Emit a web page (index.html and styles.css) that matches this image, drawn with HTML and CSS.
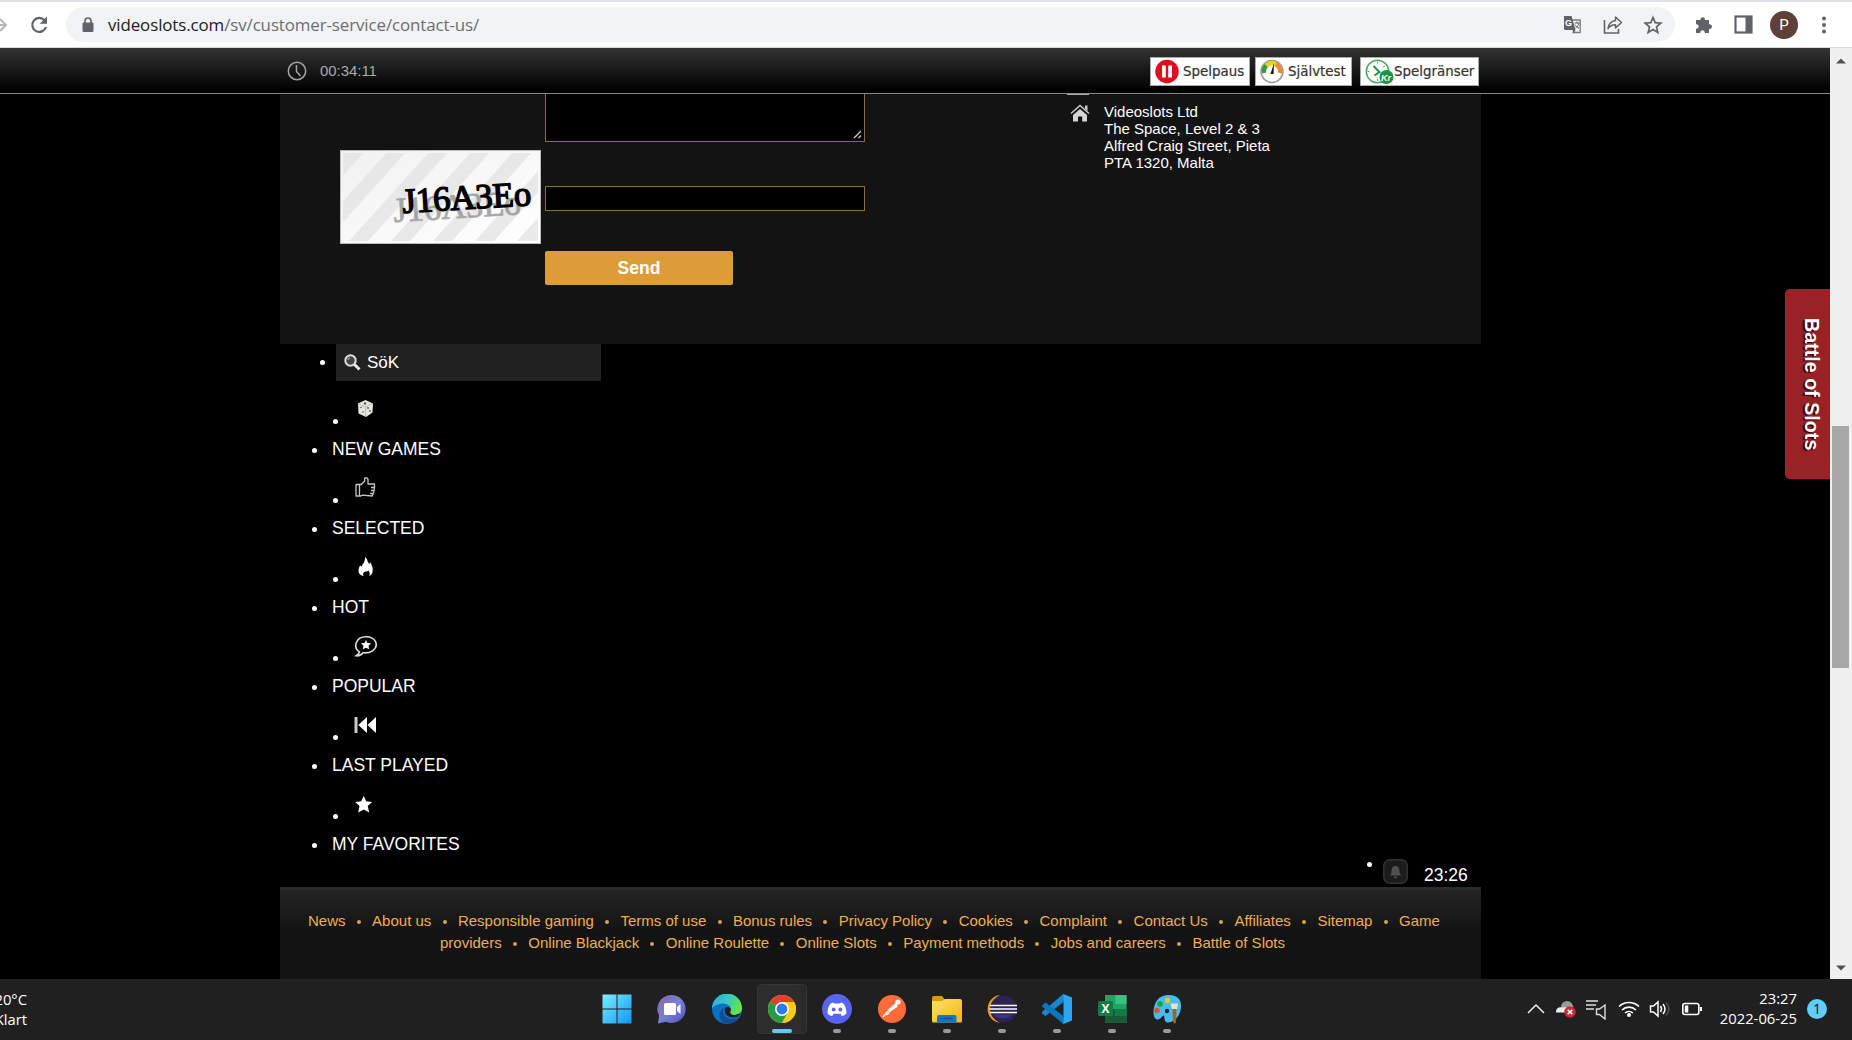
FILE: index.html
```html
<!DOCTYPE html>
<html lang="sv">
<head>
<meta charset="utf-8">
<title>Videoslots - Contact us</title>
<link rel="stylesheet" href="styles.css">
</head>
<body>
<header class="browser">
  <svg class="forward" width="8" height="20" viewBox="0 0 8 20"><path d="M0 10H6M0 4l6 6-6 6" fill="none" stroke="#b4b7ba" stroke-width="2"/></svg>
  <svg class="reload" width="20" height="20" viewBox="0 0 20 20"><path d="M15.500 5.200A7 7 0 1 0 17 12" fill="none" stroke="#5f6368" stroke-width="2.200"/><path d="M18 1.500v7.300h-7.300z" fill="#5f6368"/></svg>
  <div class="omnibox">
    <svg class="lock" width="12" height="16" viewBox="0 0 12 16"><path d="M3 7V4a3 3 0 0 1 6 0v3" fill="none" stroke="#5f6368" stroke-width="1.600"/><rect x="0.500" y="5.500" width="11" height="9.500" rx="1.200" fill="#5f6368"/></svg>
    <span class="url"><b>videoslots.com</b>/sv/customer-service/contact-us/</span>
    <div class="omni-icons">
      <svg width="20" height="20" viewBox="0 0 20 20"><path d="M9 5h8.200v12.500H9.500" fill="#f1f3f4" stroke="#777b80" stroke-width="1.300"/><path d="M1 1h7.500l4 14H2a1 1 0 0 1-1-1z" fill="#5f6368"/><text x="2" y="11" class="glyph-g">G</text><path d="M11.500 8h5M14 6.700V8m2 0c-.4 2.500-2 4-3.600 5M12 9.600c.8 1.700 2.500 3 4 3.600" fill="none" stroke="#5f6368"/><path d="M9.500 15h3l-2 3.500z" fill="#5f6368"/></svg>
      <svg width="20" height="20" viewBox="0 0 20 20"><path d="M1.500 5v13h14v-4" fill="none" stroke="#5f6368" stroke-width="1.600"/><path d="M12.500 2l6 5.500-6 5.500v-3.300c-3.500 0-5.800 1.200-7.500 4 .5-4.500 3-7.700 7.500-8.300z" fill="none" stroke="#5f6368" stroke-width="1.500" stroke-linejoin="round"/></svg>
      <svg width="20" height="20" viewBox="0 0 20 20"><path d="M10 2.500l2.200 5.200 5.600.5-4.300 3.700 1.300 5.500-4.800-2.900-4.800 2.900 1.300-5.500-4.300-3.700 5.600-.5z" fill="none" stroke="#5f6368" stroke-width="1.700"/></svg>
    </div>
  </div>
  <div class="tools">
    <svg width="20" height="20" viewBox="0 0 20 20"><path d="M2 5h4.500c-.7-3.800 5-3.800 4.500 0H15v4.300c4-.5 4 5 0 4.600V18h-4.200c.3-3.600-4.800-3.600-4.500 0H2v-4.300c3.600.3 3.600-4.800 0-4.500z" fill="#5f6368"/></svg>
    <svg width="19" height="19" viewBox="0 0 19 19"><rect x="1.500" y="1.500" width="16" height="16" fill="#fff" stroke="#5f6368" stroke-width="2.200"/><rect x="11.500" y="1" width="6" height="17" fill="#5f6368"/></svg>
    <span class="avatar">P</span>
    <svg width="6" height="20" viewBox="0 0 6 20"><g fill="#5f6368"><circle cx="3" cy="3.500" r="2"/><circle cx="3" cy="10" r="2"/><circle cx="3" cy="16.500" r="2"/></g></svg>
  </div>
</header>

<div class="viewport">
  <main class="page">
    <div class="topbar">
      <div class="session">
        <svg width="20" height="20" viewBox="0 0 20 20"><circle cx="10" cy="10" r="8.700" fill="none" stroke="#a5a5a5" stroke-width="1.500"/><path d="M9.500 4v6.500l4 4.500" fill="none" stroke="#a5a5a5" stroke-width="1.500"/></svg>
        <span>00:34:11</span>
      </div>
      <div class="rg">
        <div class="rg-box pause"><svg width="24" height="25" viewBox="0 0 24 25"><circle cx="12" cy="12.500" r="11.700" fill="#de0e1c"/><path d="M7 6.500h3.800v12H7zM13.200 6.500H17v12h-3.800z" fill="#fff"/></svg><span>Spelpaus</span></div>
        <div class="rg-box test"><svg width="24" height="25" viewBox="0 0 24 25"><circle cx="12" cy="12.500" r="11" fill="#fff" stroke="#999" stroke-width="1.500"/><path d="M4 14A8.500 8.500 0 0 1 7 6" stroke="#3a9b35" stroke-width="4.500" fill="none"/><path d="M6.200 6.500A8.500 8.500 0 0 1 15.500 5" stroke="#e3d51c" stroke-width="4.500" fill="none"/><path d="M15.500 5a8.500 8.500 0 0 1 4.500 9" stroke="#f08a24" stroke-width="4.500" fill="none"/><path d="M14 4l-.5 11h-3z" fill="#111"/></svg><span>Självtest</span></div>
        <div class="rg-box limits"><svg width="29" height="26" viewBox="0 0 29 26"><circle cx="12.500" cy="12.500" r="11.200" fill="#fff" stroke="#49a866" stroke-width="1.500"/><path d="M8.500 7l6 6-5 3.500" fill="none" stroke="#1a9440" stroke-width="2"/><path d="M12.500 2.500v2M2.500 12.500h2M12.500 20v2M20 7l-2 1" stroke="#49a866"/><circle cx="21.500" cy="18" r="7" fill="#159642"/><text x="16" y="22" class="kr">Kr</text></svg><span>Spelgränser</span></div>
      </div>
    </div>

    <div class="content">
      <section class="contact">
        <form class="form">
          <div class="message"><svg width="9" height="9" viewBox="0 0 9 9"><path d="M1 8l7-7M5.500 8L8 5.500" stroke="#ccc" stroke-width="1.300"/></svg></div>
          <div class="captcha-row">
            <svg class="captcha" width="201" height="94" viewBox="0 0 201 94">
              <defs>
                <pattern id="stripes" width="42" height="94" patternUnits="userSpaceOnUse" patternTransform="translate(7 0) skewX(-42)"><rect width="19" height="94" fill="#e4e4e4"/></pattern>
                <linearGradient id="fade" x1="0" y1="0" x2="1" y2="1"><stop offset="0" stop-color="#f1f1f1"/><stop offset="1" stop-color="#fff"/></linearGradient>
              </defs>
              <rect x=".5" y=".5" width="200" height="93" fill="url(#fade)" stroke="#bbb"/>
              <rect x="3" y="3" width="195" height="88" fill="url(#stripes)" opacity=".8"/>
              <text class="ghost" x="54" y="72" textLength="128" lengthAdjust="spacingAndGlyphs" transform="rotate(-3.500 54 72)">J16A3Eo</text>
              <text class="code" x="63" y="63" textLength="129" lengthAdjust="spacingAndGlyphs" transform="rotate(-3.500 63 63)">J16A3Eo</text>
            </svg>
            <div class="code-input"></div>
          </div>
          <div class="send">Send</div>
        </form>
        <div class="address">
          <div class="mail-edge"></div>
          <div class="address-row">
            <svg width="20" height="18" viewBox="0 0 20 18"><path d="M1 9.500L10 1.500l9 8" fill="none" stroke="#ccc" stroke-width="1.500"/><path d="M15 1.500h2.500V7L15 5z" fill="#ccc"/><path d="M3 11L10 5l7 6v6.500h-4.800v-5H8v5H3z" fill="#d6d6d6"/></svg>
            <p>Videoslots Ltd<br>The Space, Level 2 &amp; 3<br>Alfred Craig Street, Pieta<br>PTA 1320, Malta</p>
          </div>
        </div>
      </section>

      <div class="search-row"><i class="dot"></i><div class="search"><svg width="17" height="17" viewBox="0 0 17 17"><circle cx="6.500" cy="6.500" r="5.200" fill="#444" stroke="#ddd" stroke-width="2"/><path d="M10.500 10.500l5 5" stroke="#e8e8e8" stroke-width="3"/><path d="M3.800 6A3 3 0 0 1 6 3.800" stroke="#ccc" fill="none"/></svg><span>SöK</span></div></div>

      <div class="menu">
        <div class="group"><div class="icon-row"><i class="dot"></i><svg width="24" height="28" viewBox="0 0 24 28"><path d="M11.500 5l7.500 3.500-.5 9-6.500 4.500L4.500 18.500 4 8.500z" fill="#e6e6df"/><path d="M4.500 9l7 3 6.500-3.500M11.500 12v9.500" stroke="#aaa" stroke-width=".7" fill="none"/><g fill="#555"><circle cx="7" cy="12.500" r=".8"/><circle cx="9" cy="17" r=".8"/><circle cx="11" cy="8.500" r="1.200"/><circle cx="14" cy="13" r=".9"/><circle cx="16" cy="16" r=".9"/></g></svg></div><div class="label"><i class="dot"></i><span>NEW GAMES</span></div></div>
        <div class="group"><div class="icon-row"><i class="dot"></i><svg width="24" height="28" viewBox="0 0 24 28"><path d="M2 10.500h5.200l3.500-3.500V3.800h2.300l1 1.500v4.700h6.500v3.500l-.8 5-1.500 3.500-10-.8-1.500.8H2zM5.500 11v10.500M17 13.500h3M17 16.500h3M16 19.500h2.500" fill="none" stroke="#c8c8c8" stroke-width="1.300" stroke-linejoin="round"/></svg></div><div class="label"><i class="dot"></i><span>SELECTED</span></div></div>
        <div class="group"><div class="icon-row"><i class="dot"></i><svg width="24" height="28" viewBox="0 0 24 28"><path d="M11 4c3 2 2 5 4.500 7l.5-2c2 3 3 6 2.700 9-.2 2.500-1.500 4.500-3.500 5 1-2.500.5-4.500-1-5.500-.5 1-1.500 1-3 1-2 .5-2.500 2.500-1.700 4.500C6 22.500 4.300 20 4.500 17c.2-2 1-3.500 1.800-4.500l1 1.200C9 11 11.500 8 11 4z" fill="#fff"/></svg></div><div class="label"><i class="dot"></i><span>HOT</span></div></div>
        <div class="group"><div class="icon-row"><i class="dot"></i><svg width="24" height="28" viewBox="0 0 24 28"><path d="M5.500 20C-1.500 15 2 4.800 12 4.800s13.500 9 6.500 14c-3.500 2.500-7.500 2-9.500 2-1.500 2-4 3.300-6.800 3 1.800-1 2.800-2.200 3.300-3.800z" fill="none" stroke="#ddd" stroke-width="1.600"/><path d="M12 8l1.500 3 3.500.3-2.500 2.500.7 3.500-3.200-1.500-3.200 1.500.7-3.500L7 11.300l3.500-.3z" fill="#fff"/></svg></div><div class="label"><i class="dot"></i><span>POPULAR</span></div></div>
        <div class="group"><div class="icon-row"><i class="dot"></i><svg width="24" height="28" viewBox="0 0 24 28"><rect x=".5" y="6" width="3" height="16" fill="#ccc"/><path d="M13 6v16L4.300 14zM22 6v16l-8.500-8z" fill="#fff"/></svg></div><div class="label"><i class="dot"></i><span>LAST PLAYED</span></div></div>
        <div class="group"><div class="icon-row"><i class="dot"></i><svg width="24" height="28" viewBox="0 0 24 28"><path d="M9.700 6l2.500 5.300 6 .7-4.500 4 1.500 6.500-5.500-3-5.500 3L5.500 16 1.200 12l6-.7z" fill="#fff"/></svg></div><div class="label"><i class="dot"></i><span>MY FAVORITES</span></div></div>
      </div>

      <div class="clock-row">
        <i class="dot"></i>
        <svg width="25" height="25" viewBox="0 0 25 25"><rect x=".8" y=".8" width="23.400" height="23.400" rx="6" fill="#1c1c1c" stroke="#333" stroke-width="1.500"/><path d="M12.500 7c3 0 4 2.500 4 5 0 2 .7 3.500 1.800 4.500H6.700c1.100-1 1.800-2.500 1.800-4.500 0-2.500 1-5 4-5zM11 17.500h3v1.500h-3z" fill="#505050"/></svg>
        <span>23:26</span>
      </div>

      <footer class="footer">
        <div class="links first"><a>News</a><i></i><a>About us</a><i></i><a>Responsible gaming</a><i></i><a>Terms of use</a><i></i><a>Bonus rules</a><i></i><a>Privacy Policy</a><i></i><a>Cookies</a><i></i><a>Complaint</a><i></i><a>Contact Us</a><i></i><a>Affiliates</a><i></i><a>Sitemap</a><i></i><a>Game</a></div>
        <div class="links second"><a>providers</a><i></i><a>Online Blackjack</a><i></i><a>Online Roulette</a><i></i><a>Online Slots</a><i></i><a>Payment methods</a><i></i><a>Jobs and careers</a><i></i><a>Battle of Slots</a></div>
      </footer>
    </div>
    <div class="side-tab"><span>Battle of Slots</span></div>
  </main>
  <div class="scrollbar">
    <svg width="10" height="6" viewBox="0 0 10 6"><path d="M0 5.500L5 .5l5 5z" fill="#505050"/></svg>
    <div class="thumb"></div>
    <svg width="10" height="6" viewBox="0 0 10 6"><path d="M0 .5h10l-5 5z" fill="#505050"/></svg>
  </div>
</div>

<div class="taskbar">
  <div class="weather"><div>20°C</div><div>Klart</div></div>
  <div class="apps">
    <div class="app"><svg viewBox="0 0 30 30"><defs><linearGradient id="win" x1="0" y1="0" x2="30" y2="30" gradientUnits="userSpaceOnUse"><stop offset="0" stop-color="#7cefff"/><stop offset="1" stop-color="#0a96f5"/></linearGradient></defs><path d="M.5.500h14v14H.5zM15.500.500h14v14h-14zM.5 15.500h14v14H.5zM15.500 15.500h14v14h-14z" fill="url(#win)"/></svg></div>
    <div class="app"><svg viewBox="0 0 30 30"><defs><linearGradient id="chat" x1="0" y1="0" x2="1" y2="1"><stop offset="0" stop-color="#8e62a8"/><stop offset=".5" stop-color="#7482d2"/><stop offset="1" stop-color="#5150bd"/></linearGradient></defs><path d="M15 1a14 14 0 1 1-6 26.800L1 29.500l1-8A14 14 0 0 1 15 1z" fill="url(#chat)"/><rect x="7" y="9" width="12" height="12" rx="1.500" fill="#fff"/><path d="M20 13l3.500-3v10L20 17z" fill="#fff"/></svg></div>
    <div class="app"><svg viewBox="0 0 30 30"><defs><linearGradient id="edge" x1="0" y1="0" x2="1" y2=".4"><stop offset="0" stop-color="#2aa4e8"/><stop offset=".5" stop-color="#31c7ca"/><stop offset="1" stop-color="#65e24d"/></linearGradient></defs><circle cx="15" cy="15" r="15" fill="#0b6fc4"/><path d="M0 15a15 15 0 0 1 30-1c0 5-4 7-8 7s-5-2-3.500-4c2-6-6-9-11-7S0 13 0 15z" fill="url(#edge)"/><path d="M12 14c-3 4 1 12 9 11 3 0 5-1.500 7-2.500C24 29 17 31 12 29c-6-3-6-13 0-15z" fill="#154c91"/><path d="M13 14c2-2 6-1 6 2-2 3 0 5 4 5l6-2-2 3c-8 4-16-1-14-8z" fill="#202020"/></svg></div>
    <div class="app active"><svg viewBox="0 0 30 30"><circle cx="15" cy="15" r="14" fill="#fdc917"/><path d="M15 15L2.900 8A14 14 0 0 1 27.100 8z" fill="#e63d2f"/><path d="M15 15L2.900 8A14 14 0 0 0 15 29l6-10.500z" fill="#259c47"/><path d="M15 8h12.100A14 14 0 0 1 15 29l6-10.500z" fill="#fdc917"/><circle cx="15" cy="15" r="7" fill="#fff"/><circle cx="15" cy="15" r="5.400" fill="#2f78ed"/></svg><i></i></div>
    <div class="app"><svg viewBox="0 0 30 30"><circle cx="15" cy="15" r="15" fill="#5865f2"/><path d="M10.500 8.500l2 1h5l2-1c3 1 5 5.500 5 11-2 2-3.500 2.300-4.800 2.500l-1.200-2.200h-7L10.300 22c-1.300-.2-2.800-.5-4.800-2.500 0-5.500 2-10 5-11z" fill="#fff"/><circle cx="11.700" cy="15.500" r="1.900" fill="#5865f2"/><circle cx="18.300" cy="15.500" r="1.900" fill="#5865f2"/></svg><i></i></div>
    <div class="app"><svg viewBox="0 0 30 30"><circle cx="15" cy="15" r="14" fill="#ff6c37"/><circle cx="21" cy="8" r="2.600" fill="#fff"/><path d="M19 9.500L11.500 16l1 1.500 7.500-5zM11 17l-5 6M12.500 18.500L9 21" fill="#fff" stroke="#fff" stroke-width="1.200"/></svg><i></i></div>
    <div class="app"><svg viewBox="0 0 30 30"><defs><linearGradient id="folder" x1="0" y1="0" x2="1" y2="1"><stop offset="0" stop-color="#ffe067"/><stop offset="1" stop-color="#f4b70f"/></linearGradient></defs><path d="M0 8V4q0-2 2-2h8l3 4v4H0z" fill="#d79a09"/><path d="M0 7h10l3-2h15q2 0 2 2v20q0 1.500-1.500 1.500h-27Q0 28.500 0 27z" fill="url(#folder)"/><path d="M5 28.500V23q0-2 2-2h15.500q2 0 2 2v5.500z" fill="#0f77c9"/><path d="M8.500 24.500h12" stroke="#0b4c91" stroke-width="1.200"/></svg><i></i></div>
    <div class="app"><svg viewBox="0 0 30 30"><path d="M13 1C-3 3-4 26 13 29 1 23 2 7 13 1z" fill="#f7941e"/><circle cx="16.500" cy="15" r="13.500" fill="#2c2255"/><path d="M3 11.500h27M2.500 15h27.500M3 18.500h27" stroke="#fff" stroke-width="1.700"/><path d="M7 20.500h18c-3 5-15 5-18 0z" fill="#40347e"/></svg><i></i></div>
    <div class="app"><svg viewBox="0 0 30 30"><path d="M21.500 0L30 3.500v23L21.500 30 17 26l4.500-2V6.500L17 4z" fill="#2ba7f2"/><path d="M21.500 0v8L3.500 22 0 19.500v-1.800z" fill="#1688d0"/><path d="M0 11.500L3.500 8.500l18 13.500v8L0 12.500z" fill="#0976bd"/></svg><i></i></div>
    <div class="app"><svg viewBox="0 0 30 30"><path d="M8 1h21.500v28H8z" fill="#21a366"/><path d="M18.500 1h11v9h-11z" fill="#33c481"/><path d="M8 15h10.500v14H8z" fill="#185c37"/><path d="M18.500 15h11v7h-11z" fill="#107c41"/><path d="M18.500 22h11v7H8v-7z" fill="#185c37"/><rect x="1" y="7" width="15" height="15" rx="1.500" fill="#107c41"/><text x="4.500" y="19" class="xl">X</text></svg><i></i></div>
    <div class="app"><svg viewBox="0 0 30 30"><path d="M17 1c8 0 12 4 12 11 0 9-6 16-13 16.500-4 0-3-4-4-7-2 0-3 4-7 4C0 24 1 13 4 8S11 1 17 1z" fill="#43bdf2"/><circle cx="15" cy="17" r="2.200" fill="#202020"/><circle cx="15.500" cy="6.500" r="2.700" fill="#f2c91a"/><circle cx="8" cy="10" r="2.700" fill="#1da334"/><circle cx="5" cy="16.500" r="2.700" fill="#d8562c"/><path d="M20.500 15h4l-.5 13q-1.500 3-3 0z" fill="#a66516"/><path d="M18.500 9.500H26l-1 5.500h-5z" fill="#f3dfc3"/></svg><i></i></div>
  </div>
  <div class="tray">
    <svg width="18" height="12" viewBox="0 0 18 12"><path d="M1 10l8-8 8 8" fill="none" stroke="#eee" stroke-width="1.500"/></svg>
    <svg width="22" height="20" viewBox="0 0 22 20"><circle cx="12" cy="8" r="6" fill="#9a9a9a"/><path d="M1 12.500c0-3 3-5 6-4 5-1 6 1 7 5H4c-2 0-3 .5-3-1z" fill="#eee"/><path d="M14 6l4 1 1 5-6 1z" fill="#aaa"/><circle cx="15" cy="13" r="5.800" fill="#c92a34"/><path d="M12.700 10.700l4.600 4.600M17.300 10.700l-4.600 4.600" stroke="#fff" stroke-width="1.600"/></svg>
    <svg width="22" height="22" viewBox="0 0 22 22"><path d="M0 3h12M0 7h10M0 11h8" stroke="#ddd" stroke-width="1.400"/><path d="M10.500 11h3l5.500-4v14l-5.500-4.500h-3z" fill="none" stroke="#ddd" stroke-width="1.400"/></svg>
    <svg width="22" height="18" viewBox="0 0 22 18"><path d="M1 6.500a14.500 14.500 0 0 1 20 0M4 10a10 10 0 0 1 14 0M7 13a6 6 0 0 1 8 0" fill="none" stroke="#fff" stroke-width="1.600"/><circle cx="11" cy="15" r="2" fill="#fff"/></svg>
    <svg width="22" height="18" viewBox="0 0 22 18"><path d="M1.500 6h3l4.500-4v14L4.500 12h-3z" fill="none" stroke="#fff" stroke-width="1.500"/><path d="M11.500 6q2 3 0 6M14 4q4 5 0 10" fill="none" stroke="#fff" stroke-width="1.500"/><path d="M17 2.500q6 6.500 0 13" fill="none" stroke="#555" stroke-width="1.400"/></svg>
    <svg width="22" height="14" viewBox="0 0 22 14"><rect x="1.800" y="1.500" width="16" height="11" rx="2" fill="none" stroke="#fff" stroke-width="1.600"/><rect x="3.800" y="3.500" width="3.500" height="7" fill="#fff"/><path d="M19 5h2v4h-2z" fill="#fff"/></svg>
  </div>
  <div class="datetime"><div>23:27</div><div>2022-06-25</div></div>
  <span class="badge">1</span>
</div>
</body>
</html>
```
FILE: styles.css
```css
* { box-sizing: border-box; }
body {
  margin: 0;
  width: 1852px;
  height: 1040px;
  overflow: hidden;
  display: flex;
  flex-direction: column;
  background: #000;
  font-family: "Liberation Sans", Arial, sans-serif;
}
svg { display: block; flex: none; }

/* Browser toolbar */
.browser {
  height: 48px;
  flex: none;
  display: flex;
  align-items: center;
  background: #fff;
  border-top: 2px solid #dee1e6;
  border-bottom: 1px solid #d5d8d8;
}
.reload { margin: 0 0 0 21px; }
.omnibox {
  width: 1609px;
  height: 35px;
  margin-left: 17px;
  border-radius: 18px;
  background: #f1f3f4;
  display: flex;
  align-items: center;
  padding: 0 12px 0 16px;
}
.url {
  margin-left: 14px;
  font: 16.9px/24px "Open Sans", sans-serif;
  letter-spacing: -.1px;
  color: #6b6f73;
  white-space: nowrap;
}
.url b { font-weight: 400; color: #202124; }
.omni-icons { margin-left: auto; display: flex; gap: 20px; }
.glyph-g { font: bold 9px "Liberation Sans", sans-serif; fill: #fff; }
.tools { display: flex; align-items: center; margin-left: 19px; }
.tools svg:nth-child(2) { margin-left: 20px; }
.avatar {
  width: 28px;
  height: 28px;
  margin: 0 23px 0 17px;
  border-radius: 50%;
  background: #5d4037;
  color: #fff;
  font: 15px/28px Roboto, sans-serif;
  text-align: center;
}

/* Page */
.viewport { flex: 1; min-height: 0; display: flex; }
.page { width: 1830px; position: relative; background: #000; }
.topbar {
  height: 46px;
  display: flex;
  justify-content: space-between;
  padding: 0 351px 0 287px;
  background: linear-gradient(#333, #000 95%);
  border-bottom: 1px solid #8a8a82;
}
.session {
  display: flex;
  align-items: center;
  gap: 13px;
  color: #aaa;
  font-size: 14.9px;
}
.rg { display: flex; padding-top: 9px; }
.rg-box {
  height: 29px;
  display: flex;
  align-items: center;
  background: #fff;
  border: 1px solid #aaa;
  color: #333;
  font: 13.4px/20px "DejaVu Sans", sans-serif;
  -webkit-text-stroke: .2px #333;
  white-space: nowrap;
}
.rg-box span { padding-top: 1px; }
.pause { width: 100px; padding-left: 4px; gap: 4px; }
.test { width: 97px; margin-left: 5px; padding-left: 4px; gap: 4px; }
.limits { width: 119px; margin-left: 8px; padding-left: 4px; gap: 0; }
.kr { font: italic bold 9px "Liberation Sans", sans-serif; fill: #fff; }

.content { width: 1201px; margin-left: 280px; }
.contact {
  height: 250px;
  display: flex;
  background: #131313;
  padding-left: 60px;
}
.form { width: 525px; margin-right: 202px; }
.message {
  width: 320px;
  height: 48px;
  margin-left: 205px;
  display: flex;
  align-items: flex-end;
  justify-content: flex-end;
  padding: 2px;
  background: #000;
  border: 1px solid #8a6d3b;
  border-top: 0;
}
.captcha-row { display: flex; gap: 4px; margin-top: 8px; }
.ghost, .code { font: 35px "Liberation Serif", serif; }
.ghost { fill: #999; stroke: #999; stroke-width: .8; opacity: .85; }
.code { fill: #000; stroke: #000; stroke-width: 1.4; }
.code-input {
  width: 320px;
  height: 25px;
  margin-top: 36px;
  background: #000;
  border: 1px solid #8a6d3b;
}
.send {
  width: 188px;
  height: 34px;
  margin: 7px 0 0 205px;
  border-radius: 2px;
  background: #dc9d38;
  color: #fff;
  font: bold 17.5px/34px "Liberation Sans", Arial, sans-serif;
  text-align: center;
}
.mail-edge { width: 22px; height: 1px; background: #aaa; }
.address-row { display: flex; margin: 8px 0 0 3px; gap: 14px; }
.address-row svg { margin-top: 1px; }
.address-row p {
  margin: 0;
  color: #fff;
  font-size: 15px;
  line-height: 17px;
  white-space: nowrap;
}

.dot {
  width: 5px;
  height: 5px;
  flex: none;
  border-radius: 50%;
  background: #fff;
}
.search-row { display: flex; align-items: center; padding-left: 40px; gap: 11px; height: 37px; }
.search {
  width: 265px;
  height: 37px;
  display: flex;
  align-items: center;
  gap: 6px;
  padding: 0 0 0 8px;
  background: #212121;
  color: #fff;
  font-size: 17px;
}
.search svg { margin-top: -1px; }
.menu { padding-top: 14px; }
.group { height: 79px; }
.icon-row { height: 28px; display: flex; align-items: flex-end; padding-left: 53px; gap: 16px; }
.icon-row .dot { margin-bottom: -1px; }
.label {
  height: 20px;
  margin-top: 16px;
  display: flex;
  align-items: center;
  padding-left: 32px;
  gap: 15px;
  color: #fff;
  font-size: 17.5px;
  line-height: 20px;
}
.label .dot { margin-top: 3px; }
.clock-row {
  height: 25px;
  margin-top: -10px;
  padding-left: 1087px;
  display: flex;
  color: #fff;
  font-size: 17.5px;
  line-height: 20px;
}
.clock-row .dot { margin-top: 3px; }
.clock-row svg { margin-left: 11px; }
.clock-row span { margin: 6px 0 0 16px; }

.footer {
  height: 92px;
  margin-top: 3px;
  padding-top: 20px;
  border-top: 3px solid #2b2b2b;
  background: linear-gradient(#242424, #131313 42px);
}
.links {
  display: flex;
  align-items: center;
  white-space: nowrap;
  color: #f0ad4e;
  font-size: 15px;
  line-height: 22px;
}
.links i {
  width: 4px;
  height: 4px;
  margin: 2px 11.300px 0;
  border-radius: 50%;
  background: #dca050;
}
.first { padding-left: 28px; }
.second { padding-left: 160px; }

.side-tab {
  position: absolute;
  right: 0;
  top: 241px;
  width: 45px;
  height: 190px;
  padding-left: 6px;
  display: flex;
  align-items: center;
  justify-content: center;
  border-radius: 5px 0 0 5px;
  border: 1px solid #ac2025;
  border-right: 0;
  background: #992226;
  color: #fff;
  font-weight: bold;
  font-size: 19.7px;
  text-shadow: 1px 2px 1px #300;
  writing-mode: vertical-rl;
}
.scrollbar {
  width: 22px;
  padding: 10px 2px 8px;
  display: flex;
  flex-direction: column;
  align-items: center;
  background: #f0f0f0;
}
.thumb { width: 17px; height: 242px; margin: 362px 1px auto 0; background: #a8a8a8; }

/* Taskbar */
.taskbar {
  height: 61px;
  flex: none;
  display: flex;
  background: #202020;
  color: #fff;
  font: 14.8px/20px "Open Sans", sans-serif;
}
.weather { width: 27px; padding-top: 10px; display: flex; flex-direction: column; align-items: flex-end; white-space: nowrap; }
.apps { display: flex; margin-left: 562px; }
.app {
  width: 55.1px;
  display: flex;
  flex-direction: column;
  align-items: center;
  padding-top: 15px;
}
.app svg { width: 30px; height: 30px; }
.app i { width: 8px; height: 4px; margin-top: 5px; border-radius: 2px; background: #999; }
.active {
  width: 50px;
  height: 50px;
  margin: 5px 2.500px 0;
  padding-top: 10px;
  border-radius: 5px;
  background: #2d2d2d;
  box-shadow: inset 0 0 0 1px #363636, inset -6px 0 0 #292929;
}
.active i { width: 20px; background: #6cc5f5; }
.tray { display: flex; align-items: center; margin: 0 0 1px 332px; gap: 9.600px; }
.datetime { margin-left: auto; padding-top: 9px; text-align: right; }
.badge {
  width: 20px;
  height: 20px;
  margin: 20px 25px 0 10px;
  border-radius: 50%;
  background: #60cdff;
  color: #111;
  font-size: 14px;
  line-height: 20px;
  text-align: center;
}
.xl { font: bold 12px "Open Sans", sans-serif; fill: #fff; }
```
